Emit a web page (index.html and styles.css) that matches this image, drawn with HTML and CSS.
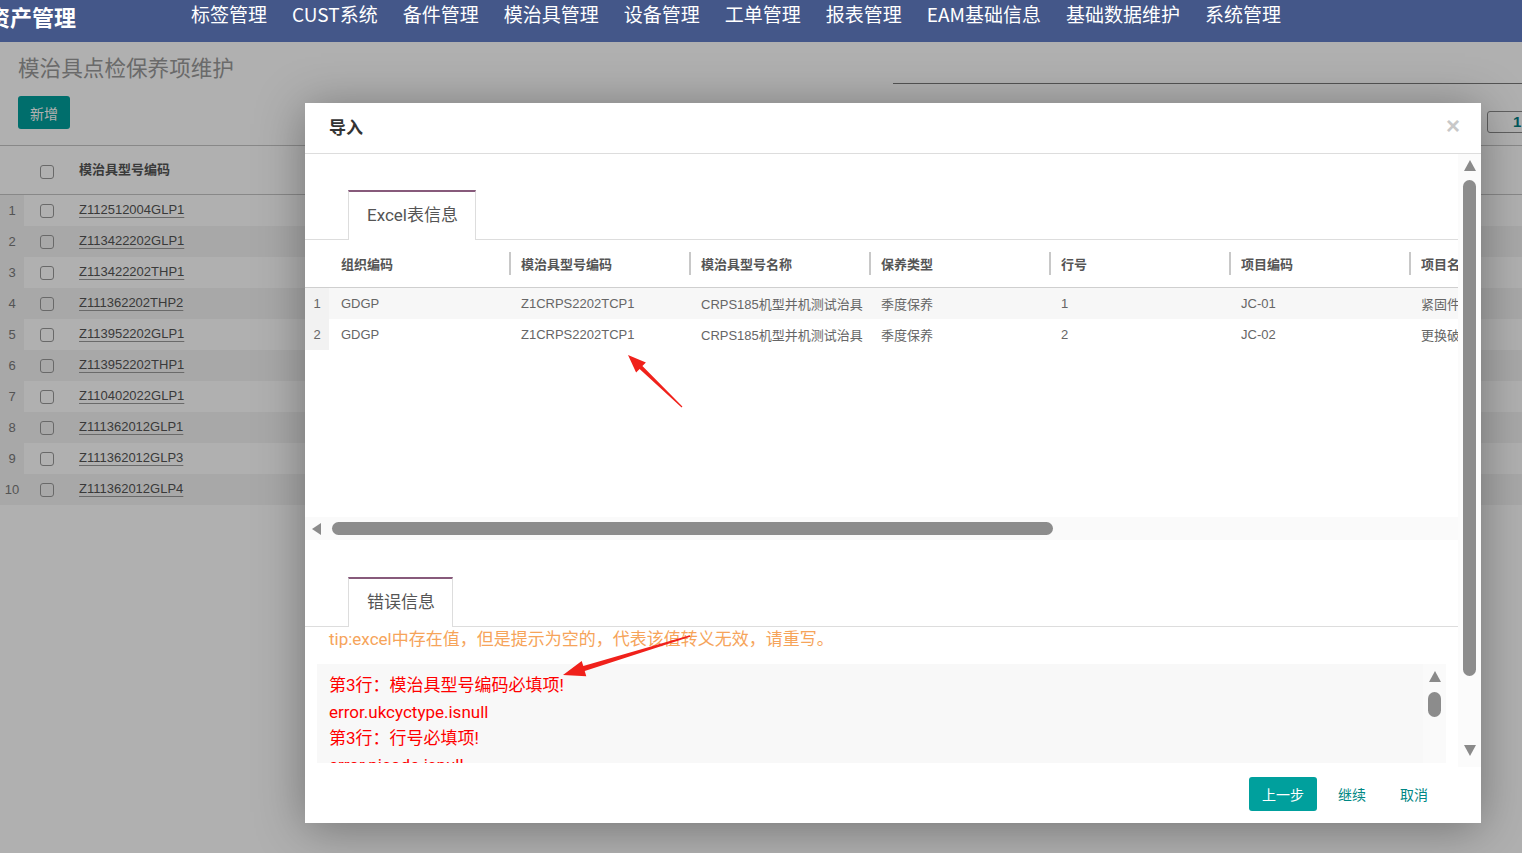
FILE: index.html
```html
<!DOCTYPE html>
<html lang="zh-CN">
<head>
<meta charset="utf-8">
<title>模治具点检保养项维护</title>
<link rel="stylesheet" href="styles.css">
</head>
<body>
<header class="nav">
  <div class="logo">资产管理</div>
  <nav class="menu">
    <a>标签管理</a>
    <a>CUST系统</a>
    <a>备件管理</a>
    <a>模治具管理</a>
    <a>设备管理</a>
    <a>工单管理</a>
    <a>报表管理</a>
    <a>EAM基础信息</a>
    <a>基础数据维护</a>
    <a>系统管理</a>
  </nav>
</header>

<main class="page">
  <div class="page-head">
    <h1 class="title">模治具点检保养项维护</h1>
    <div class="search"></div>
    <div class="actions"><button class="btn-new">新增</button></div>
    <div class="pager"><span class="pager-box">1</span></div>
  </div>
  <div class="list">
    <div class="list-row list-head">
      <span class="num"></span><span class="chk"><i class="box"></i></span><span class="code-h">模治具型号编码</span>
    </div>
    <div class="list-row"><span class="num">1</span><span class="chk"><i class="box"></i></span><a class="code">Z112512004GLP1</a></div>
    <div class="list-row"><span class="num">2</span><span class="chk"><i class="box"></i></span><a class="code">Z113422202GLP1</a></div>
    <div class="list-row"><span class="num">3</span><span class="chk"><i class="box"></i></span><a class="code">Z113422202THP1</a></div>
    <div class="list-row"><span class="num">4</span><span class="chk"><i class="box"></i></span><a class="code">Z111362202THP2</a></div>
    <div class="list-row"><span class="num">5</span><span class="chk"><i class="box"></i></span><a class="code">Z113952202GLP1</a></div>
    <div class="list-row"><span class="num">6</span><span class="chk"><i class="box"></i></span><a class="code">Z113952202THP1</a></div>
    <div class="list-row"><span class="num">7</span><span class="chk"><i class="box"></i></span><a class="code">Z110402022GLP1</a></div>
    <div class="list-row"><span class="num">8</span><span class="chk"><i class="box"></i></span><a class="code">Z111362012GLP1</a></div>
    <div class="list-row"><span class="num">9</span><span class="chk"><i class="box"></i></span><a class="code">Z111362012GLP3</a></div>
    <div class="list-row"><span class="num">10</span><span class="chk"><i class="box"></i></span><a class="code">Z111362012GLP4</a></div>
  </div>
</main>

<div class="overlay"></div>

<section class="modal">
  <header class="modal-head">
    <h2>导入</h2>
    <span class="close">×</span>
  </header>
  <div class="modal-body">
    <div class="body-content">
      <div class="tabs"><span class="tab">Excel表信息</span></div>
      <div class="grid-wrap">
        <div class="grid">
          <div class="g-row g-head">
            <span class="g-num"></span>
            <span class="g-hcell"><span class="hd first">组织编码</span></span>
            <span class="g-hcell"><span class="hd">模治具型号编码</span></span>
            <span class="g-hcell"><span class="hd">模治具型号名称</span></span>
            <span class="g-hcell"><span class="hd">保养类型</span></span>
            <span class="g-hcell"><span class="hd">行号</span></span>
            <span class="g-hcell"><span class="hd">项目编码</span></span>
            <span class="g-hcell"><span class="hd">项目名称</span></span>
          </div>
          <div class="g-row data odd">
            <span class="g-num">1</span>
            <span class="g-cell">GDGP</span>
            <span class="g-cell">Z1CRPS2202TCP1</span>
            <span class="g-cell">CRPS185机型并机测试治具</span>
            <span class="g-cell">季度保养</span>
            <span class="g-cell">1</span>
            <span class="g-cell">JC-01</span>
            <span class="g-cell">紧固件检查</span>
          </div>
          <div class="g-row data">
            <span class="g-num">2</span>
            <span class="g-cell">GDGP</span>
            <span class="g-cell">Z1CRPS2202TCP1</span>
            <span class="g-cell">CRPS185机型并机测试治具</span>
            <span class="g-cell">季度保养</span>
            <span class="g-cell">2</span>
            <span class="g-cell">JC-02</span>
            <span class="g-cell">更换破损件</span>
          </div>
        </div>
        <div class="hscroll"><i class="arr-left"></i><i class="hthumb"></i></div>
      </div>

      <div class="tabs tabs2"><span class="tab">错误信息</span></div>
      <p class="tip">tip:excel中存在值，但是提示为空的，代表该值转义无效，请重写。</p>
      <div class="errors">
        <div class="err-text">
          <div>第3行：模治具型号编码必填项!</div>
          <div>error.ukcyctype.isnull</div>
          <div>第3行：行号必填项!</div>
          <div>error.picode.isnull</div>
        </div>
        <div class="vscroll small"><i class="up"></i><i class="thumb"></i></div>
      </div>
    </div>
    <div class="vscroll main"><i class="up"></i><i class="thumb"></i><i class="down"></i></div>
  </div>
  <footer class="modal-foot">
    <span class="btn-primary">上一步</span>
    <span class="btn-link">继续</span>
    <span class="btn-link">取消</span>
  </footer>
</section>

<svg class="annot" width="1522" height="853" viewBox="0 0 1522 853">
  <polygon points="628,355 645.9,362.5 642.4,366.1 682.4,406.6 681.6,407.4 639.6,369 636.1,372.5" fill="#f0211b"/>
  <polygon points="563,675 586.3,676.2 584.7,670.9 690.2,636.8 689.8,635.2 583.3,666.1 581.7,660.9" fill="#f0211b"/>
</svg>
</body>
</html>
```

FILE: styles.css
```css
* { box-sizing: border-box; margin: 0; padding: 0; }
html, body { width: 1522px; height: 853px; overflow: hidden; }
body {
  position: relative;
  background: #fff;
  color: #555;
  font-family: "Noto Sans CJK SC", sans-serif;
}

/* top navigation */
.nav {
  height: 42px;
  background: #445789;
  display: flex;
  align-items: flex-start;
  color: #fff;
  white-space: nowrap;
}
.logo {
  margin-left: -12px;
  width: 203px;
  flex: none;
  font-size: 22px;
  font-weight: 700;
  line-height: 32px;
}
.menu { display: flex; gap: 25px; }
.menu a { font-size: 19px; line-height: 28px; color: #fff; }

/* page header */
.page-head {
  display: grid;
  grid-template-columns: 875px 1fr;
}
.title {
  font-size: 21.6px;
  font-weight: 400;
  color: #9a9a9a;
  line-height: 30px;
  padding: 10px 0 2px 18px;
}
.search { border-bottom: 1px solid #7a7a7a; margin-left: 18px; }
.actions { padding: 12px 0 16px 18px; }
.btn-new {
  display: block;
  width: 52px;
  height: 33px;
  border: 0;
  border-radius: 3px;
  background: #00a09d;
  color: #fff;
  font-family: "Noto Sans CJK SC", sans-serif;
  font-size: 14px;
}
.pager { padding: 27px 0 0 612px; }
.pager-box {
  display: block;
  width: 60px;
  height: 22px;
  border: 1px solid #8a8a8a;
  border-radius: 3px;
  padding-left: 25px;
  color: #017e84;
  font-family: "Liberation Sans", sans-serif;
  font-weight: 700;
  font-size: 15px;
  line-height: 20px;
}

/* list */
.list {
  border-top: 1px solid #c6c6c6;
  font-family: "Liberation Sans", "Noto Sans CJK SC", sans-serif;
}
.list-row { display: flex; align-items: center; height: 31px; background: #fff; }
.list-row:nth-child(odd) { background: #f4f4f4; }
.list-head { height: 49px; border-bottom: 1px solid #c6c6c6; background: #fff !important; padding-bottom: 3px; }
.num {
  width: 24px;
  align-self: stretch;
  display: flex;
  align-items: center;
  justify-content: center;
  font-size: 13px;
  color: #7a7a7a;
  background: #f3f3f3;
}
.list-head .num { background: transparent; }
.chk { width: 55px; padding-left: 16px; }
.list-head .chk { padding-top: 7px; }
.box {
  display: block;
  width: 14px;
  height: 14px;
  border: 1px solid #999;
  border-radius: 3px;
  background: transparent;
}
.code-h { font-size: 13px; font-weight: 700; color: #555; font-family: "Noto Sans CJK SC", sans-serif; }
.list-row .code { margin-top: -2px; }
.code {
  font-size: 13px;
  color: #555;
  text-decoration: underline;
  text-decoration-color: #9a9a9a;
  text-underline-offset: 3px;
}

/* overlay */
.overlay {
  position: absolute;
  left: 0;
  top: 42px;
  right: 0;
  bottom: 0;
  background: rgba(0, 0, 0, .31);
}

/* modal */
.modal {
  position: absolute;
  left: 305px;
  top: 103px;
  width: 1176px;
  height: 720px;
  background: #fff;
  display: flex;
  flex-direction: column;
  box-shadow: 0 5px 45px rgba(0, 0, 0, .35);
}
.modal-head {
  height: 51px;
  flex: none;
  border-bottom: 1px solid #ddd;
  display: flex;
  align-items: center;
  justify-content: space-between;
  padding: 0 21px 4px 24px;
}
.modal-head h2 { font-size: 17px; font-weight: 700; color: #333; }
.close {
  font-family: "Liberation Sans", sans-serif;
  font-size: 24px;
  font-weight: 700;
  color: #c8c8c8;
  line-height: 24px;
}
.modal-body { height: 613px; flex: none; display: flex; }
.body-content { width: 1153px; padding-top: 36px; overflow: hidden; }

/* tabs */
.tabs {
  display: flex;
  height: 50px;
  padding-left: 43px;
  border-bottom: 1px solid #ddd;
}
.tab {
  height: 50px;
  margin-bottom: -1px;
  padding: 0 17px 0 18px;
  border: 1px solid #ddd;
  border-top: 2px solid #875a7b;
  border-bottom: 0;
  background: #fff;
  font-family: Roboto, "Noto Sans CJK SC", sans-serif;
  font-size: 17px;
  line-height: 47px;
  color: #555;
}
.tabs2 { margin-top: 37px; }

/* import grid */
.grid { height: 277px; overflow: hidden; font-size: 13px; }
.g-row {
  display: grid;
  grid-template-columns: 24px repeat(7, 180px);
  width: max-content;
}
.g-head {
  height: 48px;
  align-items: center;
  border-bottom: 1px solid #cfcfcf;
  box-shadow: 0 1px 3px rgba(0, 0, 0, .07);
}
.hd {
  display: block;
  border-left: 2px solid #c8c8c8;
  padding-left: 10px;
  line-height: 23px;
  font-weight: 700;
  color: #555;
  white-space: nowrap;
}
.hd.first { border-left-color: transparent; }
.data { height: 31px; align-items: center; background: #fff; }
.data.odd { background: #f7f7f7; }
.g-num {
  align-self: stretch;
  text-align: center;
  line-height: 31px;
  color: #666;
  background: #f2f2f2;
  font-family: "Liberation Sans", sans-serif;
}
.g-head .g-num { background: transparent; }
.g-cell {
  padding-left: 12px;
  white-space: nowrap;
  color: #666;
  font-family: "Liberation Sans", "Noto Sans CJK SC", sans-serif;
}
.hscroll {
  height: 23px;
  background: #fafafa;
  display: flex;
  align-items: center;
}
.arr-left {
  width: 0;
  height: 0;
  border-top: 6.5px solid transparent;
  border-bottom: 6.5px solid transparent;
  border-right: 9px solid #8a8a8a;
  margin-left: 7px;
}
.hthumb {
  width: 721px;
  height: 13px;
  margin-left: 11px;
  border-radius: 7px;
  background: #8c8c8c;
}

/* tip + errors */
.tip {
  padding-left: 24px;
  font-family: Roboto, "Noto Sans CJK SC", sans-serif;
  font-size: 17px;
  line-height: 24px;
  color: #f6a45a;
}
.errors {
  margin: 13px 12px 0;
  height: 99px;
  background: #f8f8f8;
  display: flex;
  overflow: hidden;
}
.err-text {
  flex: 1;
  padding: 8px 12px 0;
  font-family: Roboto, "Noto Sans CJK SC", sans-serif;
  font-size: 17px;
  line-height: 26.5px;
  color: #f00;
}

/* scrollbars */
.vscroll {
  width: 23px;
  flex: none;
  display: flex;
  flex-direction: column;
  align-items: center;
  background: #fbfbfb;
}
.vscroll .up {
  width: 0;
  height: 0;
  border-left: 6.5px solid transparent;
  border-right: 6.5px solid transparent;
  border-bottom: 11px solid #8a8a8a;
}
.vscroll .down {
  width: 0;
  height: 0;
  border-left: 6.5px solid transparent;
  border-right: 6.5px solid transparent;
  border-top: 11px solid #8a8a8a;
}
.vscroll .thumb { width: 13px; border-radius: 7px; background: #8c8c8c; }
.main .up { margin-top: 6px; }
.main .thumb { margin-top: 9px; height: 496px; }
.main .down { margin-top: 69px; }
.small { background: #fafafa; }
.small .up { margin-top: 7px; }
.small .thumb { margin-top: 10px; height: 25px; }

/* footer */
.modal-foot {
  height: 56px;
  flex: none;
  display: flex;
  justify-content: flex-end;
  align-items: center;
  padding: 0 36px 2px 0;
  font-size: 14px;
}
.btn-primary {
  height: 34px;
  padding: 0 13px;
  border-radius: 3px;
  background: #00a09d;
  color: #fff;
  line-height: 34px;
}
.btn-link { padding: 0 17px; color: #008784; line-height: 34px; }
.btn-primary + .btn-link { margin-left: 4px; }

/* annotation arrows */
.annot { position: absolute; left: 0; top: 0; pointer-events: none; }
```
